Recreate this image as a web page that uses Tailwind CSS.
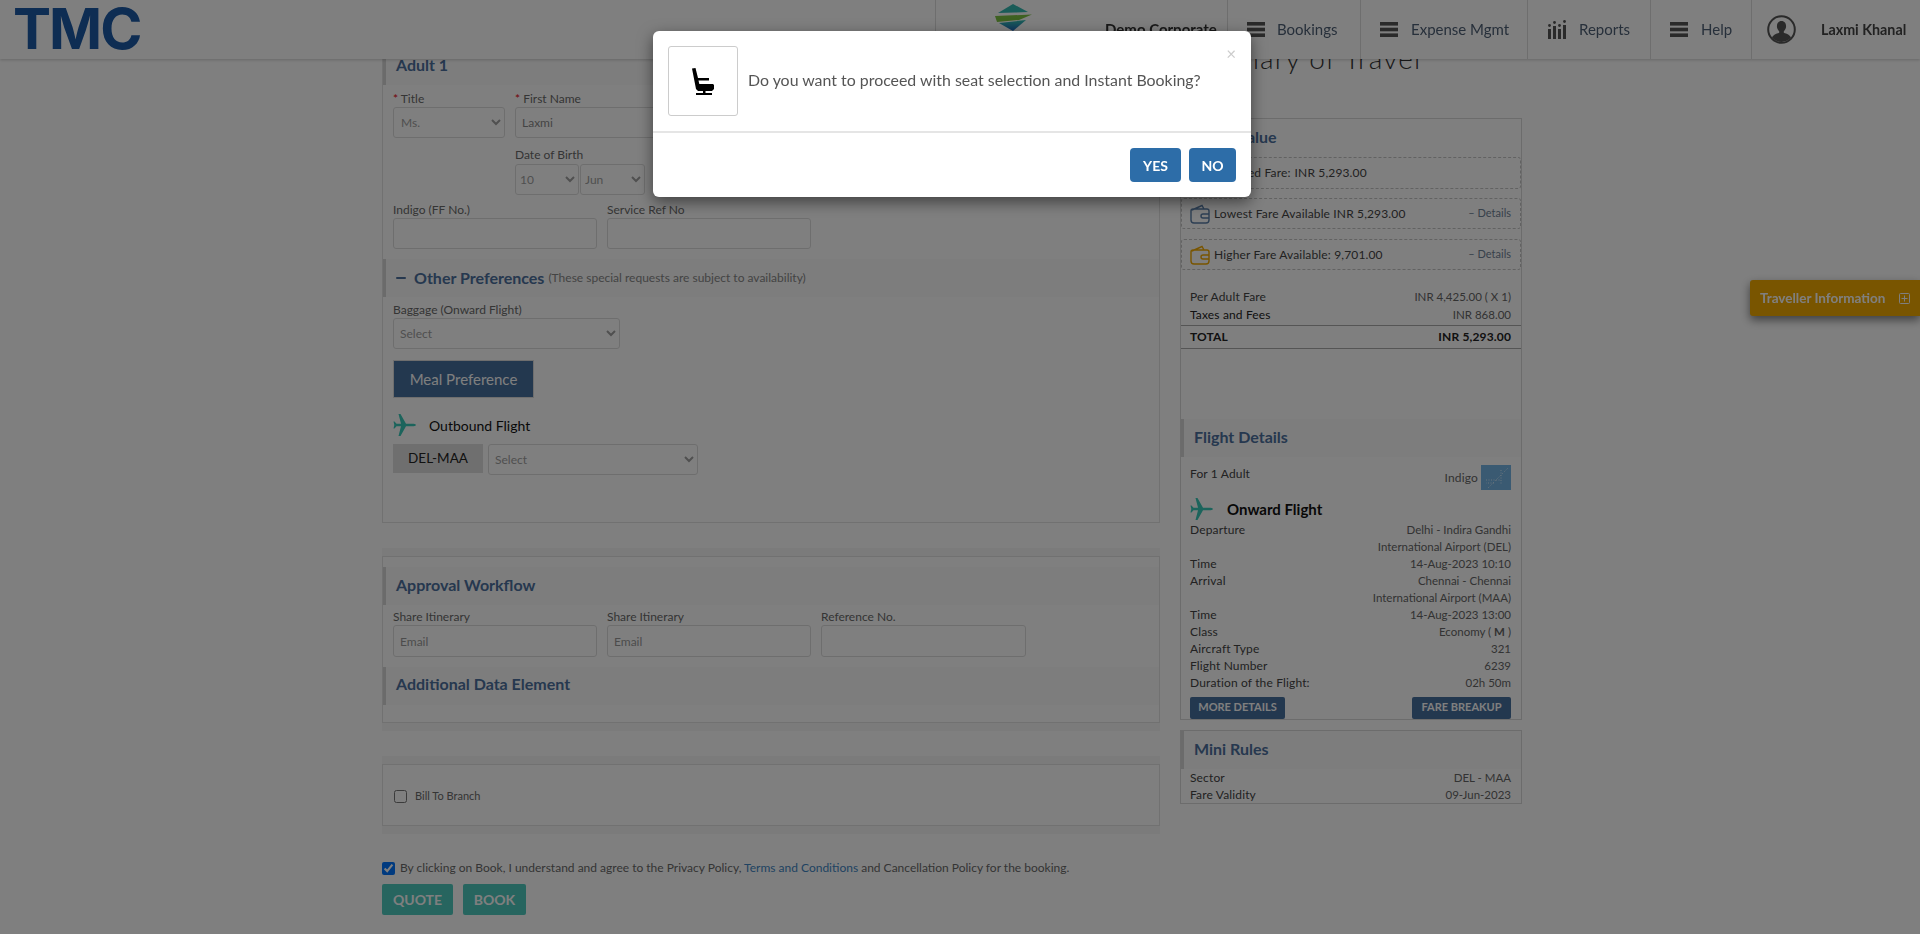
<!DOCTYPE html>
<html lang="en">
<head>
    <meta charset="UTF-8">
    <meta name="viewport" content="width=device-width, initial-scale=1.0">
    <script src="https://cdn.jsdelivr.net/npm/@tailwindcss/browser@4"></script>
    <title>Review Booking</title>
</head>
<body class="bg-white text-[#3d3d3d] font-['Lato','Liberation_Sans',sans-serif] h-[934px] overflow-hidden">

    <!-- Top bar -->
    <header class="fixed top-0 left-0 z-10 w-full h-[59px] bg-white shadow-[0_1px_3px_rgba(0,0,0,0.2)] flex justify-between">
        <div class="pl-[13px] font-['Inter',sans-serif] font-bold text-[57px] leading-[58px] tracking-[-2px] text-[#1c5aa6]">TMC</div>
        <nav class="flex text-[15px] text-[#4f6076]">
            <div class="w-[292px] border-l border-[#dcdcdc] relative">
                <svg class="absolute left-[59px] top-[4px] w-[37px] h-[27px]" viewBox="0 0 37 27">
                    <defs>
                        <linearGradient id="logoBottom" x1="0" y1="0" x2="0" y2="1"><stop offset="0" stop-color="#35c0b0"/><stop offset="1" stop-color="#1f68c0"/></linearGradient>
                    </defs>
                    <polygon points="18,0 33,8 20,8.500 3,9" fill="#35b8b0"/>
                    <polygon points="0,12 37,10.500 24,16 2,18" fill="#7dc242"/>
                    <polygon points="4,19 31,16 18,27" fill="url(#logoBottom)"/>
                </svg>
                <span class="absolute left-[169px] top-[18px] font-bold text-[#333]">Demo Corporate</span>
            </div>
            <a class="w-[133px] border-l border-[#dcdcdc] pl-[19px] flex items-center gap-[12px]">
                <svg class="w-[18px] h-[15px]" viewBox="0 0 18 15" fill="#555"><rect width="18" height="3.600"/><rect y="5.700" width="18" height="3.600"/><rect y="11.400" width="18" height="3.600"/></svg>
                Bookings
            </a>
            <a class="w-[167px] border-l border-[#dcdcdc] pl-[19px] flex items-center gap-[13px]">
                <svg class="w-[18px] h-[15px]" viewBox="0 0 18 15" fill="#555"><rect width="18" height="3.600"/><rect y="5.700" width="18" height="3.600"/><rect y="11.400" width="18" height="3.600"/></svg>
                Expense Mgmt
            </a>
            <a class="w-[123px] border-l border-[#dcdcdc] pl-[20px] flex items-center gap-[13px]">
                <svg class="w-[18px] h-[19px]" viewBox="0 0 18 19" fill="#555"><rect x="0" y="9" width="3" height="10"/><rect x="5" y="6" width="3" height="13"/><rect x="10" y="9" width="3" height="10"/><rect x="15" y="5" width="3" height="14"/><circle cx="1.500" cy="5.500" r="1.400"/><circle cx="6.500" cy="2.500" r="1.400"/><circle cx="11.500" cy="5.500" r="1.400"/><circle cx="16.500" cy="1.500" r="1.400"/></svg>
                Reports
            </a>
            <a class="w-[101px] border-l border-[#dcdcdc] pl-[19px] flex items-center gap-[13px]">
                <svg class="w-[18px] h-[15px]" viewBox="0 0 18 15" fill="#555"><rect width="18" height="3.600"/><rect y="5.700" width="18" height="3.600"/><rect y="11.400" width="18" height="3.600"/></svg>
                Help
            </a>
            <div class="w-[169px] border-l border-[#dcdcdc] pl-[15px] flex items-center gap-[25px]">
                <svg class="w-[29px] h-[29px]" viewBox="0 0 29 29">
                    <circle cx="14.500" cy="14.500" r="13.300" fill="none" stroke="#555" stroke-width="2"/>
                    <path d="M14.500 6c-3 0-4.600 2.300-4.600 5.200 0 2 1 3.800 2.300 5v1.600c-3 1-6.400 2.200-7.200 5a13 13 0 0 0 19 0c-.8-2.800-4.200-4-7.200-5v-1.600c1.300-1.200 2.300-3 2.300-5C19.100 8.300 17.500 6 14.500 6z" fill="#555"/>
                </svg>
                <span class="font-bold text-[14.300px] text-[#444]">Laxmi Khanal</span>
            </div>
        </nav>
    </header>

    <main class="pt-[59px] pl-[382px] flex gap-[20px] items-start">

        <!-- Left column -->
        <div class="w-[778px] text-[12px] text-[#6a6a6a]">

            <section class="h-[464px] border-l border-r border-b border-[#e2e2e2]">
                <h3 class="h-[26px] bg-[#fafafa] border-l-[3px] border-[#d6d6d6] pl-[10px] text-[16px] leading-[11px] font-bold text-[#4c709e]">Adult 1</h3>
                <div class="pl-[10px] pt-[7px] flex gap-[10px]">
                    <div class="w-[112px]">
                        <label class="block h-[15px] leading-[14px]"><span class="text-red-600">*</span> Title</label>
                        <select class="w-full h-[31px] pl-[3px] border border-[#ddd] rounded-[3px] text-[#a0a0a0] bg-white"><option>Ms.</option></select>
                    </div>
                    <div class="w-[400px]">
                        <label class="block h-[15px] leading-[14px]"><span class="text-red-600">*</span> First Name</label>
                        <input type="text" value="Laxmi" class="w-full h-[31px] pl-[6px] border border-[#ddd] rounded-[3px] text-[#888]">
                        <label class="block h-[15px] mt-[10px] leading-[14px]">Date of Birth</label>
                        <div class="mt-[1px] flex gap-[1px]">
                            <select class="w-[64px] h-[31px] border border-[#ddd] rounded-[3px] text-[#a0a0a0] bg-white"><option>10</option></select>
                            <select class="w-[65px] h-[31px] border border-[#ddd] rounded-[3px] text-[#a0a0a0] bg-white"><option>Jun</option></select>
                        </div>
                    </div>
                </div>
                <div class="pl-[10px] mt-[8px] flex gap-[10px]">
                    <div class="w-[204px]">
                        <label class="block h-[15px] leading-[14px]">Indigo (FF No.)</label>
                        <input type="text" class="w-full h-[31px] border border-[#ddd] rounded-[3px]">
                    </div>
                    <div class="w-[204px]">
                        <label class="block h-[15px] leading-[14px]">Service Ref No</label>
                        <input type="text" class="w-full h-[31px] border border-[#ddd] rounded-[3px]">
                    </div>
                </div>
                <div class="mt-[10px] h-[38px] bg-[#fafafa] border-l-[3px] border-[#d6d6d6] pl-[10px] flex items-center">
                    <span class="w-[10px] h-[2.500px] bg-[#4c709e] rounded-sm mr-[8px]"></span>
                    <span class="text-[16px] font-bold text-[#4c709e]">Other Preferences</span>
                    <span class="ml-[4px] text-[12px] text-[#888]">(These special requests are subject to availability)</span>
                </div>
                <div class="pl-[10px] pt-[6px]">
                    <label class="block h-[15px] leading-[14px]">Baggage (Onward Flight)</label>
                    <select class="w-[227px] h-[31px] pl-[2px] border border-[#ddd] rounded-[3px] text-[#a0a0a0] bg-white"><option>Select</option></select>
                    <div class="mt-[11px] w-[141px] h-[38px] border border-[#ddd] bg-[#47709e] text-white text-[15px] flex items-center justify-center">Meal Preference</div>
                    <div class="mt-[16px] flex items-center gap-[13px] text-[14px] text-[#111]">
                        <svg class="w-[23px] h-[22px]" viewBox="0 0 23 22" fill="#38c9b8"><path d="M23 11c0-.9-2-1.300-4-1.300h-6L7.500 0H5.500l2.500 9.700H3.500L1.500 7.500H.5l.8 3.500-.8 3.500h1l2-2.200H8L5.500 22h2l5.500-9.700h6c2 0 4-.4 4-1.300z"/></svg>
                        Outbound Flight
                    </div>
                    <div class="mt-[8px] flex gap-[5px] items-start">
                        <div class="w-[90px] h-[29px] bg-[#dedede] text-[#222] text-[13.500px] flex items-center justify-center">DEL-MAA</div>
                        <select class="w-[210px] h-[31px] pl-[2px] border border-[#ddd] rounded-[3px] text-[#a0a0a0] bg-white"><option>Select</option></select>
                    </div>
                </div>
            </section>

            <section class="mt-[25px] bg-[#f6f6f6] py-[8px]">
                <div class="h-[167px] bg-white border border-[#e2e2e2] pt-[10px]">
                    <h3 class="h-[38px] bg-[#fafafa] border-l-[3px] border-[#d6d6d6] pl-[10px] text-[16px] leading-[36px] font-bold text-[#4c709e]">Approval Workflow</h3>
                    <div class="pl-[10px] pt-[5px] flex gap-[10px]">
                        <div class="w-[204px]">
                            <label class="block h-[15px] leading-[14px]">Share Itinerary</label>
                            <input type="text" placeholder="Email" class="w-full h-[32px] pl-[6px] border border-[#ddd] rounded-[3px] placeholder:text-[#999]">
                        </div>
                        <div class="w-[204px]">
                            <label class="block h-[15px] leading-[14px]">Share Itinerary</label>
                            <input type="text" placeholder="Email" class="w-full h-[32px] pl-[6px] border border-[#ddd] rounded-[3px] placeholder:text-[#999]">
                        </div>
                        <div class="w-[205px]">
                            <label class="block h-[15px] leading-[14px]">Reference No.</label>
                            <input type="text" class="w-full h-[32px] border border-[#ddd] rounded-[3px]">
                        </div>
                    </div>
                    <h3 class="mt-[10px] h-[38px] bg-[#fafafa] border-l-[3px] border-[#d6d6d6] pl-[10px] text-[16px] leading-[34px] font-bold text-[#4c709e]">Additional Data Element</h3>
                </div>
            </section>

            <section class="mt-[25px] bg-[#f6f6f6] py-[8px]">
                <div class="h-[62px] bg-white border border-[#e2e2e2] pl-[11px] pt-[2px] flex items-center gap-[8px] text-[11px]">
                    <input type="checkbox" class="w-[13px] h-[13px]">
                    <label>Bill To Branch</label>
                </div>
            </section>

            <div class="mt-[25px] flex items-center gap-[5px]">
                <input type="checkbox" checked class="w-[13px] h-[13px]">
                <span>By clicking on Book, I understand and agree to the Privacy Policy, <a class="text-[#3f86c4]">Terms and Conditions</a> and Cancellation Policy for the booking.</span>
            </div>
            <div class="mt-[7px] flex gap-[10px]">
                <button class="w-[71px] h-[31px] rounded-[2px] bg-[#4ecabe] text-white text-[14px] font-bold">QUOTE</button>
                <button class="w-[63px] h-[31px] rounded-[2px] bg-[#4ecabe] text-white text-[14px] font-bold">BOOK</button>
            </div>
        </div>

        <!-- Right column -->
        <div class="w-[342px] text-[12px] tracking-[0.15px] text-[#444]">
            <h2 class="-mt-[21px] h-[40px] mb-[40px] text-[28px] leading-[40px] tracking-[1.200px] font-light text-[#333]">Summary of Travel</h2>

            <section class="h-[602px] border border-[#d8d8d8]">
                <h3 class="h-[37px] pl-[13px] text-[16px] leading-[36px] tracking-normal font-bold text-[#4c709e]">Great Value</h3>
                <div class="mt-[1px] h-[32px] border border-dashed border-[#c4c4c4] rounded-[3px] pl-[33px] flex items-center">Selected Fare: <span class="ml-1">INR 5,293.00</span></div>
                <div class="mt-[9px] h-[31px] border border-dashed border-[#c4c4c4] rounded-[3px] pl-[8px] pr-[9px] flex items-center">
                    <svg class="w-[20px] h-[20px] mr-[4px]" viewBox="0 0 20 20" fill="none" stroke="#5a7ea8" stroke-width="1.400"><path d="M2 6 12 1.500 14 5M3 5h14a2 2 0 0 1 2 2v9a3 3 0 0 1-3 3H4a3 3 0 0 1-3-3V7a2 2 0 0 1 2-2z"/><path d="M19 10h-6a2 2 0 0 0 0 4h6"/></svg>
                    Lowest Fare Available&nbsp;INR 5,293.00
                    <span class="ml-auto text-[11px] tracking-normal text-[#6f8296]">– Details</span>
                </div>
                <div class="mt-[10px] h-[31px] border border-dashed border-[#c4c4c4] rounded-[3px] pl-[8px] pr-[9px] flex items-center">
                    <svg class="w-[20px] h-[20px] mr-[4px]" viewBox="0 0 20 20" fill="none" stroke="#f2aa00" stroke-width="1.400"><path d="M2 6 12 1.500 14 5M3 5h14a2 2 0 0 1 2 2v9a3 3 0 0 1-3 3H4a3 3 0 0 1-3-3V7a2 2 0 0 1 2-2z"/><path d="M19 10h-6a2 2 0 0 0 0 4h6"/></svg>
                    Higher Fare Available: 9,701.00
                    <span class="ml-auto text-[11px] tracking-normal text-[#6f8296]">– Details</span>
                </div>
                <div class="mt-[18px] pl-[9px] pr-[10px] flex justify-between h-[18px] items-center"><span>Per Adult Fare</span><span class="text-[11.500px] tracking-normal text-[#666]">INR 4,425.00 ( X 1)</span></div>
                <div class="pl-[9px] pr-[10px] flex justify-between h-[18px] items-center"><span class="text-[#222]">Taxes and Fees</span><span class="text-[11.500px] tracking-normal text-[#666]">INR 868.00</span></div>
                <div class="mt-[1px] border-y border-[#aaa] h-[24px] pl-[9px] pr-[10px] flex justify-between items-center font-bold text-[#222]"><span>TOTAL</span><span>INR 5,293.00</span></div>

                <h3 class="mt-[70px] h-[38px] bg-[#fafafa] border-l-[3px] border-[#d6d6d6] pl-[10px] text-[16px] leading-[35px] tracking-normal font-bold text-[#4c709e]">Flight Details</h3>
                <div class="mt-[8px] pl-[9px] pr-[10px] flex justify-between items-start">
                    <span>For 1 Adult</span>
                    <span class="flex items-center gap-[3px]"><span class="text-[#666]">Indigo</span>
                        <svg class="w-[30px] h-[25px]" viewBox="0 0 30 25"><rect width="30" height="25" fill="#74b4e4"/><path d="M7 23 27 3M5 15h14M20 5v15M13 18H5" stroke="#cfe8fa" stroke-width="1" stroke-dasharray="1 1.500" fill="none"/></svg>
                    </span>
                </div>
                <div class="mt-[8px] px-[9px] flex items-center gap-[14px] text-[15px] tracking-normal font-bold text-[#111]">
                    <svg class="w-[23px] h-[22px]" viewBox="0 0 23 22" fill="#38c9b8"><path d="M23 11c0-.9-2-1.300-4-1.300h-6L7.500 0H5.500l2.500 9.700H3.500L1.500 7.500H.5l.8 3.500-.8 3.500h1l2-2.200H8L5.500 22h2l5.500-9.700h6c2 0 4-.4 4-1.300z"/></svg>
                    Onward Flight
                </div>
                <div class="pl-[9px] pr-[10px] leading-[17px]">
                    <div class="flex justify-between"><span>Departure</span><span class="text-right text-[11.500px] tracking-normal text-[#666]">Delhi - Indira Gandhi<br>International Airport (DEL)</span></div>
                    <div class="flex justify-between"><span>Time</span><span class="text-[11.500px] tracking-normal text-[#666]">14-Aug-2023 10:10</span></div>
                    <div class="flex justify-between"><span>Arrival</span><span class="text-right text-[11.500px] tracking-normal text-[#666]">Chennai - Chennai<br>International Airport (MAA)</span></div>
                    <div class="flex justify-between"><span>Time</span><span class="text-[11.500px] tracking-normal text-[#666]">14-Aug-2023 13:00</span></div>
                    <div class="flex justify-between"><span>Class</span><span class="text-[11.500px] tracking-normal text-[#666]">Economy ( <b>M</b> )</span></div>
                    <div class="flex justify-between"><span>Aircraft Type</span><span class="text-[11.500px] tracking-normal text-[#666]">321</span></div>
                    <div class="flex justify-between"><span>Flight Number</span><span class="text-[11.500px] tracking-normal text-[#666]">6239</span></div>
                    <div class="flex justify-between"><span>Duration of the Flight:</span><span class="text-[11.500px] tracking-normal text-[#666]">02h 50m</span></div>
                </div>
                <div class="mt-[6px] pl-[9px] pr-[10px] flex justify-between">
                    <button class="w-[95px] h-[22px] rounded-[2px] bg-[#47709e] text-white text-[11px] tracking-normal font-bold">MORE DETAILS</button>
                    <button class="w-[99px] h-[22px] rounded-[2px] bg-[#47709e] text-white text-[11px] tracking-normal font-bold">FARE BREAKUP</button>
                </div>
            </section>

            <section class="mt-[10px] h-[74px] border border-[#d8d8d8]">
                <h3 class="h-[38px] bg-[#fafafa] border-l-[3px] border-[#d6d6d6] pl-[10px] text-[16px] leading-[36px] tracking-normal font-bold text-[#4c709e]">Mini Rules</h3>
                <div class="pl-[9px] pr-[10px] leading-[17px]">
                    <div class="flex justify-between"><span>Sector</span><span class="text-[11.500px] tracking-normal text-[#666]">DEL - MAA</span></div>
                    <div class="flex justify-between"><span>Fare Validity</span><span class="text-[11.500px] tracking-normal text-[#666]">09-Jun-2023</span></div>
                </div>
            </section>
        </div>
    </main>

    <!-- Side tab -->
    <div class="fixed top-[280px] right-0 w-[170px] h-[36px] rounded-l-[3px] bg-[#f2aa00] shadow-[0_4px_10px_rgba(0,0,0,0.5)] pl-[10px] pr-[10px] flex items-center justify-between text-[13.500px] font-bold text-white">
        Traveller Information
        <svg class="w-[11px] h-[11px]" viewBox="0 0 11 11" fill="none" stroke="#fff"><rect x=".5" y=".5" width="10" height="10" rx="1"/><path d="M5.500 2.500v6M2.500 5.500h6"/></svg>
    </div>

    <!-- Backdrop -->
    <div class="fixed inset-0 z-20 bg-black/50"></div>

    <!-- Modal -->
    <div class="fixed z-30 left-[653px] top-[31px] w-[598px] h-[166px] bg-white rounded-[6px] shadow-[0_5px_15px_rgba(0,0,0,0.5)]">
        <div class="h-[100px] pt-[15px] pl-[15px] flex gap-[10px] relative">
            <div class="w-[70px] h-[70px] border border-[#ccc] rounded-[3px] flex items-center justify-center">
                <svg class="w-[22px] h-[27px]" viewBox="0 0 22 27" fill="#000">
                    <path d="M0 .5 3.500 0 6 10h11v2.500H6.500l.8 3.500H21l1 1v4L20 23H6l-2-2z"/>
                    <rect x="11" y="23" width="2.500" height="2"/>
                    <rect x="4" y="25" width="16" height="2"/>
                </svg>
            </div>
            <p class="text-[15.900px] leading-[68px] text-[#555]">Do you want to proceed with seat selection and Instant Booking?</p>
            <span class="absolute right-[15px] top-[14px] text-[17px] leading-[17px] text-[#ccc]">×</span>
        </div>
        <div class="h-[2px] bg-[#e5e5e5]"></div>
        <div class="pt-[15px] pr-[15px] flex justify-end gap-[8px]">
            <button class="w-[51px] h-[34px] rounded-[4px] bg-[#2d6da8] text-white text-[14px] font-bold">YES</button>
            <button class="w-[47px] h-[34px] rounded-[4px] bg-[#2d6da8] text-white text-[14px] font-bold">NO</button>
        </div>
    </div>

</body>
</html>
